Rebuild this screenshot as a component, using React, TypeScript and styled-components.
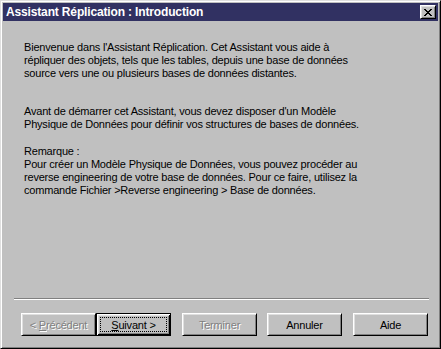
import React from "react";
import styled, { createGlobalStyle, css } from "styled-components";

const GlobalStyle = createGlobalStyle`
  html, body {
    margin: 0;
    padding: 0;
    background: #c0c0c0;
  }
  * {
    box-sizing: border-box;
  }
`;

const uiFont = `"Liberation Sans", Arial, sans-serif`;

const Window = styled.div`
  width: 441px;
  height: 349px;
  display: flex;
  flex-direction: column;
  padding: 2px;
  background: #c0c0c0;
  border: 1px solid;
  border-color: #dfdfdf #000 #000 #dfdfdf;
  box-shadow: inset 1px 1px #fff, inset -1px -1px #808080;
  font-family: ${uiFont};
`;

const TitleBar = styled.div`
  height: 18px;
  display: flex;
  align-items: center;
  justify-content: space-between;
  padding: 0 2px 0 3px;
  background: #313162;
`;

const TitleText = styled.span`
  color: #fff;
  font-size: 12px;
  font-weight: bold;
  letter-spacing: -0.15px;
  white-space: nowrap;
`;

const bevel = css`
  border: 1px solid;
  border-color: #fff #000 #000 #fff;
  box-shadow: inset 1px 1px #dfdfdf, inset -1px -1px #808080;
  background: #c0c0c0;
`;

const CloseButton = styled.button`
  ${bevel};
  width: 16px;
  height: 14px;
  padding: 0;
  display: flex;
  align-items: center;
  justify-content: center;
`;

const Content = styled.div`
  flex: 1;
  padding: 20px 0 0 21px;
  font-size: 11px;
  line-height: 13px;
  letter-spacing: -0.2px;
  color: #000;
  white-space: nowrap;
`;

const Paragraph = styled.p<{ $gap: number }>`
  margin: 0 0 ${(p) => p.$gap}px 0;
`;

const Footer = styled.div`
  padding: 0 9px 10px 11px;
`;

const Separator = styled.div`
  height: 2px;
  border-top: 1px solid #808080;
  border-bottom: 1px solid #fff;
  margin-bottom: 13px;
`;

const ButtonRow = styled.div`
  display: flex;
  padding-left: 7px;
`;

const Button = styled.button<{ $gapBefore?: number; $isDefault?: boolean }>`
  ${bevel};
  width: 75px;
  height: 23px;
  margin-left: ${(p) => p.$gapBefore ?? 0}px;
  padding: 0;
  font-family: ${uiFont};
  font-size: 11px;
  letter-spacing: -0.2px;
  color: #000;
  position: relative;

  &:disabled {
    color: #808080;
    text-shadow: 1px 1px #fff;
  }

  ${(p) =>
    p.$isDefault &&
    css`
      border: 1px solid #000;
      box-shadow: inset 1px 1px #fff, inset -1px -1px #000,
        inset 2px 2px #dfdfdf, inset -2px -2px #808080;
    `}
`;

const FocusRing = styled.span`
  position: absolute;
  inset: 3px;
  border: 1px dotted #000;
  display: flex;
  align-items: center;
  justify-content: center;
`;

const Mnemonic = styled.span`
  text-decoration: underline;
  text-underline-offset: 1px;
`;

function CloseGlyph() {
  return (
    <svg width="8" height="7" viewBox="0 0 8 7" shapeRendering="crispEdges">
      <path
        d="M0 0h2v1H0zM6 0h2v1H6zM1 1h2v1H1zM5 1h2v1H5zM2 2h4v1H2zM3 3h2v1H3zM2 4h4v1H2zM1 5h2v1H1zM5 5h2v1H5zM0 6h2v1H0zM6 6h2v1H6z"
        fill="#000"
      />
    </svg>
  );
}

export default function App() {
  return (
    <>
      <GlobalStyle />
      <Window>
        <TitleBar>
          <TitleText>Assistant Réplication : Introduction</TitleText>
          <CloseButton aria-label="Fermer">
            <CloseGlyph />
          </CloseButton>
        </TitleBar>

        <Content>
          <Paragraph $gap={25}>
            Bienvenue dans l'Assistant Réplication. Cet Assistant vous aide à
            <br />
            répliquer des objets, tels que les tables, depuis une base de données
            <br />
            source vers une ou plusieurs bases de données distantes.
          </Paragraph>
          <Paragraph $gap={14}>
            Avant de démarrer cet Assistant, vous devez disposer d'un Modèle
            <br />
            Physique de Données pour définir vos structures de bases de données.
          </Paragraph>
          <Paragraph $gap={0}>
            Remarque :
            <br />
            Pour créer un Modèle Physique de Données, vous pouvez procéder au
            <br />
            reverse engineering de votre base de données. Pour ce faire, utilisez la
            <br />
            commande Fichier &gt;Reverse engineering &gt; Base de données.
          </Paragraph>
        </Content>

        <Footer>
          <Separator />
          <ButtonRow>
            <Button disabled>
              &lt; <Mnemonic>P</Mnemonic>récédent
            </Button>
            <Button $isDefault>
              <FocusRing>
                <Mnemonic>S</Mnemonic>uivant &gt;
              </FocusRing>
            </Button>
            <Button disabled $gapBefore={11}>
              Terminer
            </Button>
            <Button $gapBefore={10}>Annuler</Button>
            <Button $gapBefore={11}>Aide</Button>
          </ButtonRow>
        </Footer>
      </Window>
    </>
  );
}
